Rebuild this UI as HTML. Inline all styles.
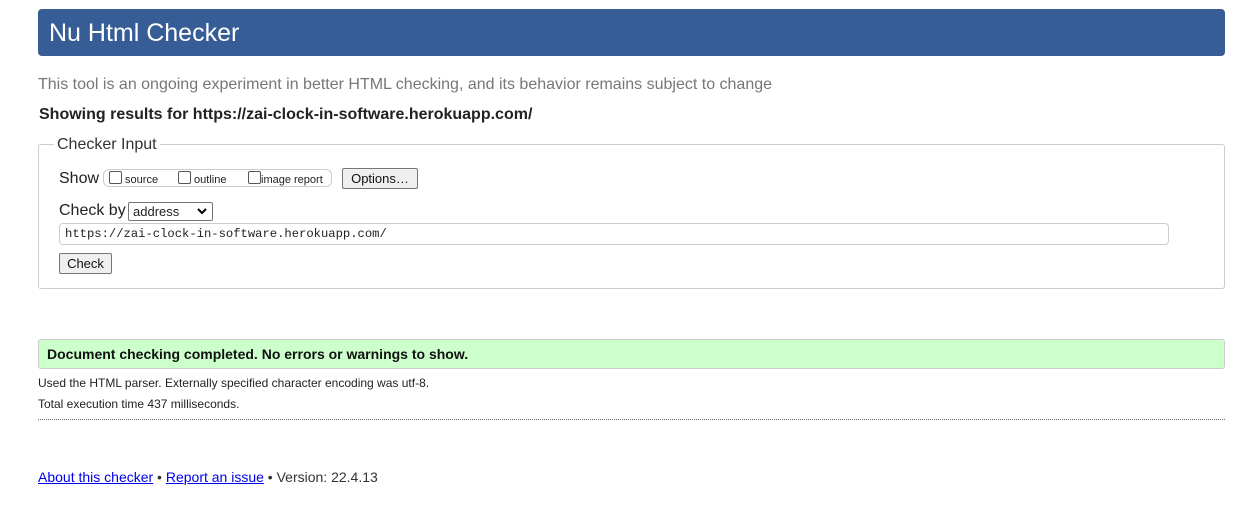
<!DOCTYPE html>
<html><head><meta charset="utf-8"><style>
body{margin:0;background:#fff;font-family:"Liberation Sans",Arial,sans-serif;color:#222;width:1238px;height:509px;position:relative;overflow:hidden}
.a{position:absolute}
h1{position:absolute;left:38px;top:9px;width:1187px;height:47px;margin:0;background:#365d95;color:#fff;border-radius:4px;font-weight:normal;font-size:25px;line-height:48px;padding-left:11px;box-sizing:border-box}
.cb{display:inline-block;width:11px;height:11px;border:1px solid #555;border-radius:2px;vertical-align:-1px;background:#fff}
.btn{position:absolute;background:#efefef;border:1px solid #767676;border-radius:2px;font-size:13px;color:#111;text-align:center;box-sizing:border-box}
a{color:#0000ee;text-decoration:underline}
</style></head><body>
<h1>Nu Html Checker</h1>
<div class="a" style="left:38px;top:76px;font-size:16px;color:#777">This tool is an ongoing experiment in better HTML checking, and its behavior remains subject to change</div>
<div class="a" style="left:39px;top:106px;font-size:16px;font-weight:bold;color:#222">Showing results for https://zai-clock-in-software.herokuapp.com/</div>
<div class="a" style="left:38px;top:144px;width:1187px;height:145px;border:1px solid #ccc;border-radius:3px;box-sizing:border-box"></div>
<div class="a" style="left:54px;top:136px;font-size:16px;background:#fff;padding:0 3px;color:#333">Checker Input</div>
<div class="a" style="left:59px;top:170px;font-size:16px">Show</div>
<div class="a" style="left:103px;top:169px;width:229px;height:18px;border:1px solid #ccc;border-radius:6px;box-sizing:border-box"></div>
<div class="a" style="left:109px;top:171px;font-size:11px"><span class="cb"></span> source</div>
<div class="a" style="left:178px;top:171px;font-size:11px"><span class="cb"></span> outline</div>
<div class="a" style="left:248px;top:171px;font-size:11px"><span class="cb"></span>image report</div>
<div class="btn" style="left:342px;top:168px;width:76px;height:21px;line-height:19px">Options…</div>
<div class="a" style="left:59px;top:202px;font-size:16px">Check by</div>
<div class="a" style="left:128px;top:202px;width:85px;height:19px;border:1px solid #767676;border-radius:2px;box-sizing:border-box;font-size:13px;line-height:17px;padding-left:4px">address<svg style="position:absolute;right:5px;top:5px" width="10" height="7"><path d="M1 1l4 4 4-4" stroke="#000" stroke-width="2" fill="none"/></svg></div>
<div class="a" style="left:59px;top:223px;width:1110px;height:22px;border:1px solid #ccc;border-radius:4px;box-sizing:border-box;font-family:'Liberation Mono',monospace;font-size:12.2px;line-height:21px;padding-left:5px">https://zai-clock-in-software.herokuapp.com/</div>
<div class="btn" style="left:59px;top:253px;width:53px;height:21px;line-height:19px">Check</div>
<div class="a" style="left:38px;top:339px;width:1187px;height:30px;background:#ccffcc;border:1px solid #ccc;border-radius:3px;box-sizing:border-box;font-size:14px;font-weight:bold;color:#111;line-height:28px;padding-left:8px">Document checking completed. No errors or warnings to show.</div>
<div class="a" style="left:38px;top:376px;font-size:12px;color:#222">Used the HTML parser. Externally specified character encoding was utf-8.</div>
<div class="a" style="left:38px;top:397px;font-size:12px;color:#222">Total execution time 437 milliseconds.</div>
<div class="a" style="left:38px;top:419px;width:1187px;border-top:1px dotted #666"></div>
<div class="a" style="left:38px;top:469px;font-size:14px;color:#333"><a>About this checker</a> • <a>Report an issue</a> • Version: 22.4.13</div>
</body></html>
